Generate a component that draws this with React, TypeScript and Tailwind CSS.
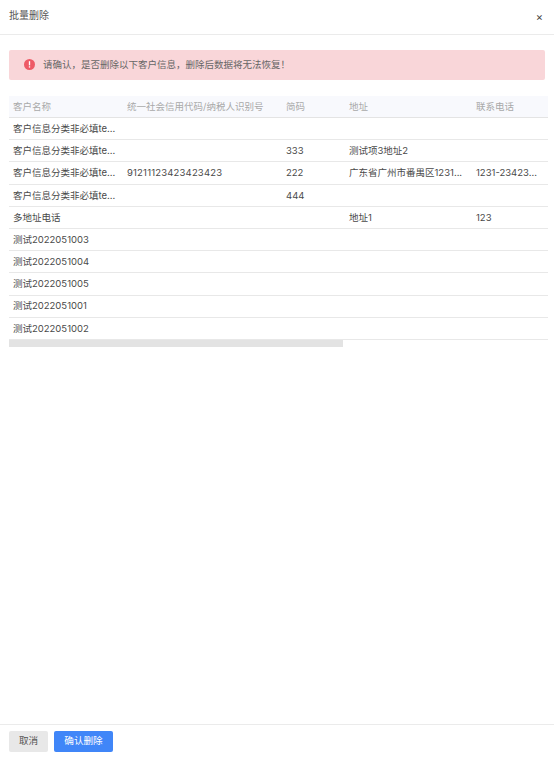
const cols = ["w-[114px]", "w-[159px]", "w-[63px]", "w-[127px]", "w-[76px]"];
const head = ["客户名称", "统一社会信用代码/纳税人识别号", "简码", "地址", "联系电话"];
const long = "客户信息分类非必填te...";
const rows: string[][] = [
  [long, "", "", "", ""],
  [long, "", "333", "测试项3地址2", ""],
  [long, "91211123423423423", "222", "广东省广州市番禺区1231...", "1231-23423..."],
  [long, "", "444", "", ""],
  ["多地址电话", "", "", "地址1", "123"],
  ["测试2022051003", "", "", "", ""],
  ["测试2022051004", "", "", "", ""],
  ["测试2022051005", "", "", "", ""],
  ["测试2022051001", "", "", "", ""],
  ["测试2022051002", "", "", "", ""],
];

export default function App() {
  return (
    <div
      className="w-[554px] h-[758px] bg-white flex flex-col overflow-hidden text-[#4a4a4a]"
      style={{ fontFamily: 'Inter, "Noto Sans CJK SC", sans-serif' }}
    >
      <div className="h-[35px] shrink-0 border-b border-[#ebebeb] pl-[9px] pr-[11px] flex items-center justify-between">
        <span className="text-[10px] text-[#555] -mt-[3px]">批量删除</span>
        <span className="text-[11px] leading-none text-[#444]">×</span>
      </div>
      <div className="flex-1 px-[9px] pt-[15px]">
        <div className="h-[30px] bg-[#f9d6d9] rounded-[2px] flex items-center pl-[15px] gap-[8px]">
          <svg width="11" height="11" viewBox="0 0 10 10" className="shrink-0 -mt-[1px]">
            <circle cx="5" cy="5" r="5" fill="#ee5a66" />
            <rect x="4.4" y="2" width="1.2" height="3.8" fill="#fff" />
            <rect x="4.4" y="6.6" width="1.2" height="1.2" fill="#fff" />
          </svg>
          <span className="text-[9.5px] text-[#666]">请确认，是否删除以下客户信息，删除后数据将无法恢复！</span>
        </div>
        <div className="mt-[16px] w-[539px]">
          <div className="h-[22px] bg-[#f8f9fd] border-b border-[#e4e4e4] flex items-center text-[9.5px] text-[#a9a9a9] pt-[1px]">
            {head.map((h, i) => (
              <div key={h} className={`${cols[i]} pl-[4px] whitespace-nowrap`}>{h}</div>
            ))}
          </div>
          {rows.map((r, ri) => (
            <div key={ri} className="h-[22.2px] border-b border-[#e8e8e8] flex items-center text-[9.5px] text-[#4a4a4a] pt-[1px]">
              {r.map((c, i) => (
                <div key={i} className={`${cols[i]} pl-[4px] whitespace-nowrap ${i === 1 ? "tracking-[0.18px]" : ""}`}>{c}</div>
              ))}
            </div>
          ))}
          <div className="h-[7px] w-[334px] bg-[#e3e3e3]" />
        </div>
      </div>
      <div className="h-[34px] shrink-0 border-t border-[#ebebeb] pl-[9px] pt-[6px] flex gap-[6px] items-start">
        <button className="h-[21px] w-[39px] rounded-[2px] bg-[#e8e8e8] text-[9.6px] text-[#555]">取消</button>
        <button className="h-[21px] w-[59px] rounded-[2px] bg-[#4086f8] text-[9.6px] text-white">确认删除</button>
      </div>
    </div>
  );
}
